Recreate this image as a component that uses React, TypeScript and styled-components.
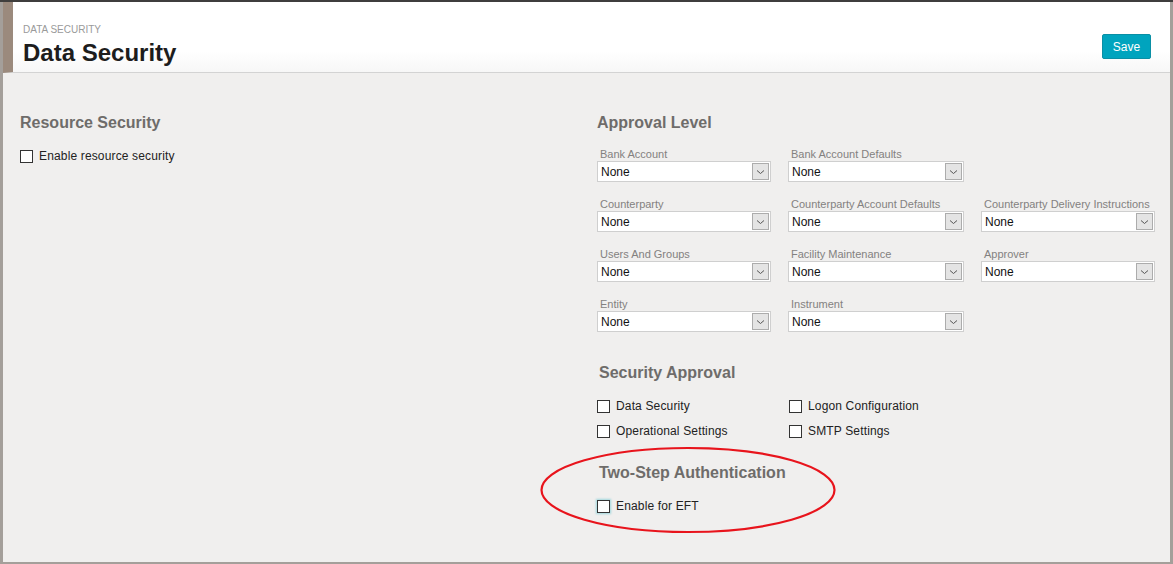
import React from 'react'
import styled, { createGlobalStyle } from 'styled-components'

const Global = createGlobalStyle`
  html, body { margin: 0; padding: 0; background: #a49f9a; }
  body { font-family: "Liberation Sans", Arial, sans-serif; }
  * { box-sizing: border-box; }
`

const Page = styled.div`
  width: 1173px;
  height: 564px;
  border-top: 2px solid #3f3e3d;
  padding: 0 3px 2px 3px;
  background: #a49f9a;
`
const Window = styled.div`
  height: 100%;
  display: flex;
  flex-direction: column;
  background: #f0efee;
`
const Header = styled.div`
  height: 71px;
  display: flex;
  align-items: flex-end;
  justify-content: space-between;
  padding: 21px 19px 5px 10px;
  border-left: 10px solid #9b8a7d;
  border-bottom: 1px solid #d3d3d3;
  background: linear-gradient(#ffffff 0%, #ffffff 70%, #f7f7f7 100%);
`
const Crumb = styled.div`
  font-size: 10px;
  line-height: 12px;
  color: #9a9a9a;
`
const Title = styled.h1`
  margin: 3px 0 0;
  font-size: 24px;
  line-height: 28px;
  font-weight: bold;
  color: #1d1d1d;
`
const SaveButton = styled.button`
  width: 49px;
  height: 25px;
  margin-bottom: 8px;
  padding: 0;
  background: #00a4be;
  border: 1px solid #0a8fa5;
  border-radius: 2px;
  color: #fff;
  font-family: inherit;
  font-size: 12px;
`
const Body = styled.div`
  position: relative;
  flex: 1;
  display: grid;
  grid-template-columns: 577px 1fr;
  padding: 40px 0 0 17px;
`
const Column = styled.div`
  display: flex;
  flex-direction: column;
`
const SectionTitle = styled.h2<{ $top?: number }>`
  margin: ${p => p.$top ?? 0}px 0 0 ${p => (p.$top ? 2 : 0)}px;
  font-size: 16px;
  line-height: 20px;
  font-weight: bold;
  color: #6e6c6a;
`
const FieldGrid = styled.div`
  margin-top: 15px;
  display: grid;
  grid-template-columns: 174px 176px 174px;
  column-gap: 17px;
  row-gap: 16px;
`
const Field = styled.div<{ $col?: number }>`
  grid-column: ${p => p.$col ?? 'auto'};
  display: flex;
  flex-direction: column;
`
const FieldLabel = styled.div`
  padding-left: 3px;
  font-size: 11px;
  line-height: 13px;
  color: #838180;
  white-space: nowrap;
`
const SelectBox = styled.div`
  height: 21px;
  display: flex;
  align-items: center;
  justify-content: space-between;
  padding: 1px 1px 1px 3px;
  background: #fff;
  border: 1px solid #cfcfcf;
  font-size: 12px;
  color: #111;
`
const Arrow = styled.span`
  width: 17px;
  height: 17px;
  display: flex;
  align-items: center;
  justify-content: center;
  background: #e4e4e4;
  border: 1px solid #acacac;
`
const CheckGrid = styled.div<{ $top: number }>`
  margin-top: ${p => p.$top}px;
  display: grid;
  grid-template-columns: 192px 192px;
  row-gap: 7px;
`
const CheckRow = styled.label<{ $top?: number }>`
  margin-top: ${p => p.$top ?? 0}px;
  height: 18px;
  display: flex;
  align-items: center;
  gap: 5px;
  font-size: 12px;
  letter-spacing: 0.15px;
  color: #222;
`
const Box = styled.span<{ $focus?: boolean }>`
  width: 13px;
  height: 13px;
  margin-right: 1px;
  background: #fff;
  border: 1px solid #333;
  box-shadow: ${p => (p.$focus ? '0 0 2px 1px #9fd6dc' : 'none')};
`
const Annotation = styled.svg`
  position: absolute;
  left: 536px;
  top: 373px;
  pointer-events: none;
`

const Select = ({ label, col }: { label: string; col?: number }) => (
  <Field $col={col}>
    <FieldLabel>{label}</FieldLabel>
    <SelectBox>
      None
      <Arrow>
        <svg width="9" height="6" viewBox="0 0 9 6">
          <path d="M1 1.5 L4.5 4.5 L8 1.5" fill="none" stroke="#555" strokeWidth="1" />
        </svg>
      </Arrow>
    </SelectBox>
  </Field>
)

const Check = ({ label, top, focus }: { label: string; top?: number; focus?: boolean }) => (
  <CheckRow $top={top}>
    <Box $focus={focus} />
    {label}
  </CheckRow>
)

export default function App() {
  return (
    <>
      <Global />
      <Page>
        <Window>
          <Header>
            <div>
              <Crumb>DATA SECURITY</Crumb>
              <Title>Data Security</Title>
            </div>
            <SaveButton>Save</SaveButton>
          </Header>
          <Body>
            <Column>
              <SectionTitle>Resource Security</SectionTitle>
              <Check label="Enable resource security" top={14} />
            </Column>
            <Column>
              <SectionTitle>Approval Level</SectionTitle>
              <FieldGrid>
                <Select label="Bank Account" />
                <Select label="Bank Account Defaults" />
                <Select label="Counterparty" col={1} />
                <Select label="Counterparty Account Defaults" />
                <Select label="Counterparty Delivery Instructions" />
                <Select label="Users And Groups" />
                <Select label="Facility Maintenance" />
                <Select label="Approver" />
                <Select label="Entity" />
                <Select label="Instrument" />
              </FieldGrid>
              <SectionTitle $top={31}>Security Approval</SectionTitle>
              <CheckGrid $top={14}>
                <Check label="Data Security" />
                <Check label="Logon Configuration" />
                <Check label="Operational Settings" />
                <Check label="SMTP Settings" />
              </CheckGrid>
              <SectionTitle $top={23}>Two-Step Authentication</SectionTitle>
              <Check label="Enable for EFT" top={14} focus />
            </Column>
            <Annotation width="304" height="92" viewBox="0 0 304 92">
              <ellipse cx="149" cy="44" rx="146.5" ry="42" fill="none" stroke="#e8141c" strokeWidth="2.2" />
            </Annotation>
          </Body>
        </Window>
      </Page>
    </>
  )
}
